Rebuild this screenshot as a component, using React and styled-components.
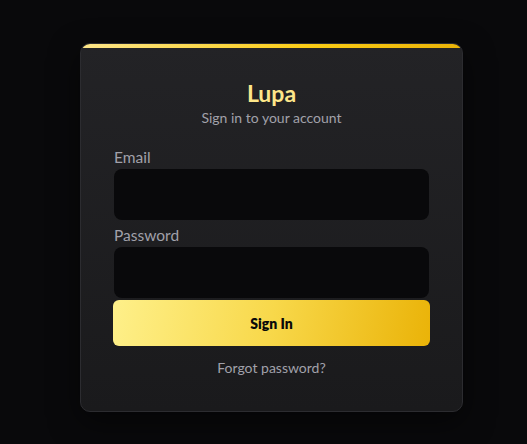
import React from 'react'
import styled, { createGlobalStyle } from 'styled-components'

const Global = createGlobalStyle`
  html, body {
    margin: 0;
    padding: 0;
    background: #09090b;
    font-family: Lato, "Noto Sans", sans-serif;
  }
  * { box-sizing: border-box; }
`

const Page = styled.div`
  min-height: 100vh;
  display: flex;
  justify-content: center;
  align-items: flex-start;
  padding: 43px 0 0 16px;
`

const Card = styled.div`
  width: 383px;
  border: 1px solid #2c2c30;
  border-radius: 10px;
  overflow: hidden;
  background: linear-gradient(180deg, #232326 0%, #1a1a1c 100%);
  box-shadow: 0 10px 30px rgba(0, 0, 0, 0.5);
`

const TopBar = styled.div`
  height: 4px;
  background: linear-gradient(90deg, #fde68a 0%, #facc15 60%, #eab308 100%);
`

const Body = styled.div`
  padding: 31px 33px 33px;
  display: flex;
  flex-direction: column;
`

const Title = styled.h1`
  margin: 0;
  text-align: center;
  font-size: 23px;
  line-height: 28px;
  font-weight: 700;
  color: #fde68a;
`

const Subtitle = styled.p`
  margin: 1px 0 0;
  text-align: center;
  font-size: 14px;
  line-height: 20px;
  color: #a1a1aa;
`

const Label = styled.label`
  display: block;
  font-size: 15.5px;
  line-height: 20px;
  color: #a1a1aa;
  margin: ${p => p.$first ? '19px' : '5px'} 0 2px;
`

const Input = styled.input`
  display: block;
  width: 100%;
  height: 51px;
  border: none;
  outline: none;
  border-radius: 8px;
  background: #09090b;
  color: #e4e4e7;
  padding: 0 14px;
  font: inherit;
`

const Button = styled.button`
  margin: 2px -1px 0;
  height: 46px;
  border: none;
  border-radius: 6px;
  background: linear-gradient(100deg, #fef08a 0%, #f8d84a 50%, #eab308 100%);
  color: #0a0a0a;
  font-family: inherit;
  font-size: 14px;
  font-weight: 800;
  cursor: pointer;
`

const Forgot = styled.a`
  margin-top: 12px;
  text-align: center;
  font-size: 14px;
  line-height: 20px;
  color: #a1a1aa;
  text-decoration: none;
`

export default function App() {
  return (
    <>
      <Global />
      <Page>
        <Card>
          <TopBar />
          <Body>
            <Title>Lupa</Title>
            <Subtitle>Sign in to your account</Subtitle>
            <Label $first htmlFor="email">Email</Label>
            <Input id="email" type="email" />
            <Label htmlFor="password">Password</Label>
            <Input id="password" type="password" />
            <Button type="button">Sign In</Button>
            <Forgot href="#">Forgot password?</Forgot>
          </Body>
        </Card>
      </Page>
    </>
  )
}
